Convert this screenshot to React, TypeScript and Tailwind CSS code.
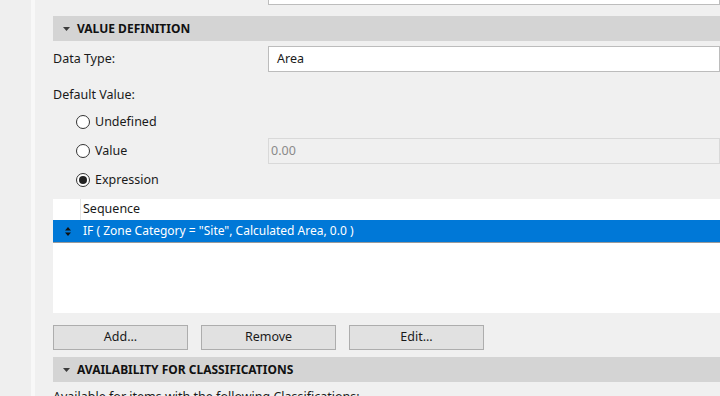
import React from 'react';

const font = { fontFamily: '"Noto Sans", "Open Sans", sans-serif' };

function SectionHeader({ title }: { title: string }) {
  return (
    <div className="shrink-0 flex items-center h-[25px] bg-[#d4d4d4] pl-[10px]">
      <svg width="7" height="4" viewBox="0 0 7 4" className="mr-[7px]">
        <path d="M0 0 L7 0 L3.5 4 Z" fill="#3c3c3c" />
      </svg>
      <span className="text-[12px] font-bold text-[#111]">{title}</span>
    </div>
  );
}

function Radio({ label, checked }: { label: string; checked?: boolean }) {
  return (
    <div className="flex items-center gap-[5px]">
      <span className="w-[14px] h-[14px] rounded-full border border-[#333] bg-white flex items-center justify-center">
        {checked && <span className="w-[8px] h-[8px] rounded-full bg-[#222]" />}
      </span>
      <span className="text-[12.5px] text-[#1a1a1a]">{label}</span>
    </div>
  );
}

function Button({ label }: { label: string }) {
  return (
    <button className="w-[135px] h-[25px] bg-[#e1e1e1] border border-[#adadad] text-[12.5px] text-[#1a1a1a] flex items-center justify-center">
      {label}
    </button>
  );
}

export default function App() {
  return (
    <div className="w-[720px] h-[396px] overflow-hidden flex bg-[#f0f0f0]" style={font}>
      {/* left gutter */}
      <div className="w-[31px] shrink-0 bg-[#efefef]" />
      <div className="w-[4px] shrink-0 bg-[#f8f8f8]" />

      <div className="flex-1 flex flex-col pl-[18px]">
        {/* tail of field above */}
        <div className="h-[5px] shrink-0 flex">
          <div className="w-[215px] shrink-0" />
          <div className="flex-1 bg-white border border-t-0 border-[#bdbdbd]" />
        </div>

        <div className="mt-[11px] shrink-0">
          <SectionHeader title="VALUE DEFINITION" />
        </div>

        <div className="shrink-0 flex items-center mt-[5px] h-[26px]">
          <div className="w-[215px] shrink-0 text-[12.5px] text-[#1a1a1a]">Data Type:</div>
          <div className="flex-1 h-full bg-white border border-[#bcbcbc] flex items-center pl-[8px] text-[12.5px] text-[#1a1a1a]">
            Area
          </div>
        </div>

        <div className="shrink-0 mt-[14px] text-[12.5px] text-[#1a1a1a] leading-[18px]">Default Value:</div>

        <div className="shrink-0 flex flex-col pl-[23px] mt-[9px] gap-[11px]">
          <div className="h-[18px] flex items-center">
            <Radio label="Undefined" />
          </div>
          <div className="h-[18px] flex items-center">
            <div className="w-[192px] shrink-0">
              <Radio label="Value" />
            </div>
            <div className="flex-1 h-[26px] border border-[#d9d9d9] bg-[#f0f0f0] flex items-center pl-[2px] text-[12.5px] text-[#8a8a8a]">
              0.00
            </div>
          </div>
          <div className="h-[18px] flex items-center">
            <Radio label="Expression" checked />
          </div>
        </div>

        {/* expression list */}
        <div className="shrink-0 mt-[10px] h-[114px] bg-white flex flex-col">
          <div className="h-[21px] shrink-0 flex">
            <div className="w-[28px] border-r border-[#e5e5e5]" />
            <div className="pl-[2px] text-[12.5px] text-[#1a1a1a] flex items-center">Sequence</div>
          </div>
          <div className="h-[23px] shrink-0 bg-[#0078d7] flex items-center border-b border-[#9a9a9a]">
            <div className="w-[28px] flex justify-center pl-[1px]">
              <svg width="6" height="9" viewBox="0 0 6 9">
                <path d="M0 3.5 L3 0 L6 3.5 Z M0 5.5 L3 9 L6 5.5 Z" fill="#111" />
              </svg>
            </div>
            <div className="pl-[2px] text-[12px] text-white">
              IF ( Zone Category = "Site", Calculated Area, 0.0 )
            </div>
          </div>
        </div>

        <div className="shrink-0 flex gap-[13px] mt-[12px]">
          <Button label="Add..." />
          <Button label="Remove" />
          <Button label="Edit..." />
        </div>

        <div className="shrink-0 mt-[7px]">
          <SectionHeader title="AVAILABILITY FOR CLASSIFICATIONS" />
        </div>

        <div className="shrink-0 mt-[6px] text-[12.5px] leading-[18px] text-[#1a1a1a]">
          Available for items with the following Classifications:
        </div>
      </div>
    </div>
  );
}
